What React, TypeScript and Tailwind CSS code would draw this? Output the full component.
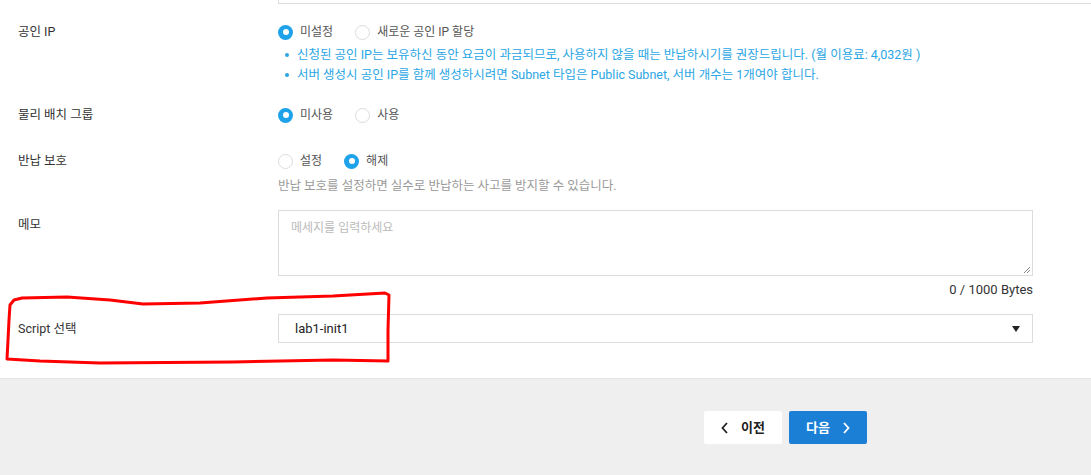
import React from "react";

const font = "font-['Roboto','Noto_Sans_CJK_KR',sans-serif]";

const Radio = ({ label, checked }: { label: string; checked?: boolean }) => (
  <label className="flex items-center gap-[7px] text-[12px] text-[#555]">
    {checked ? (
      <span className="w-[15px] h-[15px] rounded-full bg-[#1ea2ea] flex items-center justify-center">
        <span className="w-[6px] h-[6px] rounded-full bg-white" />
      </span>
    ) : (
      <span className="w-[15px] h-[15px] rounded-full border border-[#dcdcdc] bg-white" />
    )}
    {label}
  </label>
);

const Row = ({
  label,
  children,
  className = "",
}: {
  label: string;
  children: React.ReactNode;
  className?: string;
}) => (
  <div className={`flex ${className}`}>
    <div className="w-[278px] pl-[18px] text-[12.5px] text-[#333] leading-[18px]">{label}</div>
    <div className="flex-1 pr-[58px]">{children}</div>
  </div>
);

export default function App() {
  return (
    <div className={`relative w-[1091px] h-[475px] bg-white overflow-hidden ${font}`}>
      {/* form area */}
      <div className="h-[378px] flex flex-col">
        <div className="ml-[278px] h-[4px] border-b border-l border-[#dedede]" />

        <Row label="공인 IP" className="mt-[19px]">
          <div className="flex gap-[22px] h-[18px] items-center">
            <Radio label="미설정" checked />
            <Radio label="새로운 공인 IP 할당" />
          </div>
          <ul className="mt-[4px] pl-[7px] text-[12.5px] leading-[20px] text-[#2ba6e4]">
            <li className="flex items-center gap-[8px]">
              <span className="w-[4px] h-[4px] rounded-full bg-[#2ba6e4]" />
              신청된 공인 IP는 보유하신 동안 요금이 과금되므로, 사용하지 않을 때는 반납하시기를 권장드립니다. (월 이용료: 4,032원 )
            </li>
            <li className="flex items-center gap-[8px]">
              <span className="w-[4px] h-[4px] rounded-full bg-[#2ba6e4]" />
              서버 생성시 공인 IP를 함께 생성하시려면 Subnet 타입은 Public Subnet, 서버 개수는 1개여야 합니다.
            </li>
          </ul>
        </Row>

        <Row label="물리 배치 그룹" className="mt-[21px]">
          <div className="flex gap-[22px] h-[18px] items-center">
            <Radio label="미사용" checked />
            <Radio label="사용" />
          </div>
        </Row>

        <Row label="반납 보호" className="mt-[28px]">
          <div className="flex gap-[22px] h-[18px] items-center">
            <Radio label="설정" />
            <Radio label="해제" checked />
          </div>
          <p className="mt-[6px] text-[12.5px] leading-[20px] text-[#9a9a9a]">
            반납 보호를 설정하면 실수로 반납하는 사고를 방지할 수 있습니다.
          </p>
        </Row>

        <Row label="메모" className="mt-[14px] [&>div:first-child]:pt-[6px]">
          <div className="relative h-[66px] border border-[#dcdcdc] px-[12px] py-[8px] text-[12px] text-[#bbb]">
            메세지를 입력하세요
            <svg className="absolute right-[1px] bottom-[1px]" width="10" height="10" viewBox="0 0 10 10">
              <path d="M9 3 L3 9 M9 6 L6 9" stroke="#888" strokeWidth="1" />
            </svg>
          </div>
          <div className="mt-[4px] text-right text-[13px] leading-[20px] text-[#333]">0 / 1000 Bytes</div>
        </Row>

        <Row label="Script 선택" className="mt-[14px] items-center">
          <div className="h-[29px] border border-[#dcdcdc] flex items-center justify-between pl-[16px] pr-[12px] text-[13px] text-[#222]">
            lab1-init1
            <span className="w-0 h-0 border-l-[4px] border-r-[4px] border-t-[6px] border-l-transparent border-r-transparent border-t-[#222]" />
          </div>
        </Row>
      </div>

      {/* footer */}
      <div className="h-[97px] bg-[#efefef] border-t border-[#e4e4e4] flex justify-start pt-[32px] gap-[7px] pl-[704px]">
        <button className="w-[78px] h-[33px] bg-white rounded-[2px] flex items-center justify-center gap-[12px] text-[13px] font-bold text-[#222]">
          <svg width="8" height="12" viewBox="0 0 8 12">
            <path d="M6 1 L1.5 6 L6 11" stroke="#222" strokeWidth="1.8" fill="none" />
          </svg>
          이전
        </button>
        <button className="w-[78px] h-[33px] bg-[#1b7fd6] rounded-[2px] flex items-center justify-center gap-[12px] text-[13px] font-bold text-white">
          다음
          <svg width="8" height="12" viewBox="0 0 8 12">
            <path d="M2 1 L6.5 6 L2 11" stroke="#fff" strokeWidth="1.8" fill="none" />
          </svg>
        </button>
      </div>

      {/* red hand-drawn annotation */}
      <svg className="absolute left-0 top-0 pointer-events-none" width="1091" height="475">
        <path
          d="M10 305 L14 300 L22 298 L67 297 L110 300 L143 304 L200 303 L267 298 L333 296 L385 293 L389 295 L388 330 L388 361 L333 360 L233 362 L100 363 L40 361 L7 359 L8 340 L9 320 Z"
          stroke="#ff0000"
          strokeWidth="3"
          fill="none"
          strokeLinejoin="round"
        />
      </svg>
    </div>
  );
}
